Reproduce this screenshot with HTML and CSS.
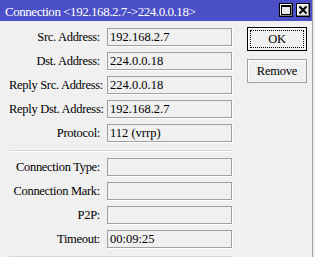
FILE: index.html
```html
<!DOCTYPE html>
<html>
<head>
<meta charset="utf-8">
<link rel="stylesheet" href="styles.css">
</head>
<body>
<div class="window">
  <div class="titlebar">
    <span class="title">Connection &lt;192.168.2.7-&gt;224.0.0.18&gt;</span>
    <div class="tb-buttons">
      <span class="tb-btn">
        <svg width="12" height="12" viewBox="0 0 12 12"><rect x="1.5" y="1.5" width="9" height="9" fill="none" stroke="#000" stroke-width="1"/><rect x="1" y="1" width="10" height="2" fill="#000"/></svg>
      </span>
      <span class="tb-btn">
        <svg width="12" height="12" viewBox="0 0 12 12"><path d="M2.5 2.5 L9.5 9.5 M9.5 2.5 L2.5 9.5" stroke="#000" stroke-width="2"/></svg>
      </span>
    </div>
  </div>
  <div class="content">
    <div class="form">
      <div class="row"><span class="label">Src. Address:</span><span class="field">192.168.2.7</span></div>
      <div class="row"><span class="label">Dst. Address:</span><span class="field">224.0.0.18</span></div>
      <div class="row"><span class="label">Reply Src. Address:</span><span class="field">224.0.0.18</span></div>
      <div class="row"><span class="label">Reply Dst. Address:</span><span class="field">192.168.2.7</span></div>
      <div class="row"><span class="label">Protocol:</span><span class="field">112 (vrrp)</span></div>
      <div class="sep"></div>
      <div class="row"><span class="label">Connection Type:</span><span class="field"></span></div>
      <div class="row"><span class="label">Connection Mark:</span><span class="field"></span></div>
      <div class="row"><span class="label">P2P:</span><span class="field"></span></div>
      <div class="row"><span class="label">Timeout:</span><span class="field">00:09:25</span></div>
      <div class="sep"></div>
    </div>
    <div class="actions">
      <span class="btn btn-default"><span class="focus">OK</span></span>
      <span class="btn">Remove</span>
    </div>
  </div>
</div>
</body>
</html>
```
FILE: styles.css
```css
html, body {
  margin: 0;
  padding: 0;
  background: #f0f0f0;
}
body {
  font-family: "Liberation Serif", "Times New Roman", serif;
  font-size: 12.5px;
  color: #000;
  overflow: hidden;
}
.window {
  width: 312px;
  height: 257px;
  border-right: 1px solid #a0a0a0;
  background: #f0f0f0;
  overflow: hidden;
}
.titlebar {
  height: 21px;
  background: #4a4fc7;
  color: #fff;
  display: flex;
  align-items: flex-start;
  justify-content: space-between;
}
.title {
  font-size: 13px;
  letter-spacing: -0.45px;
  line-height: 15px;
  padding: 4px 0 0 5px;
  white-space: nowrap;
}
.tb-buttons {
  display: flex;
  gap: 3px;
  padding: 3px 2px 0 0;
}
.tb-btn {
  width: 14px;
  height: 14px;
  box-sizing: border-box;
  background: #e8e8e8;
  border: 1px solid #000;
  box-shadow: inset -1px -1px 0 #808080, inset 1px 1px 0 #fff;
  display: flex;
  align-items: center;
  justify-content: center;
}
.content {
  display: flex;
  align-items: flex-start;
  padding-top: 6px;
}
.form {
  padding: 1px 0 0 9px;
  width: 223px;
  display: flex;
  flex-direction: column;
  gap: 6px;
}
.row {
  display: grid;
  grid-template-columns: 91px 125px;
  column-gap: 7px;
  height: 18px;
  line-height: 16px;
}
.label {
  text-align: right;
  white-space: nowrap;
  letter-spacing: -0.3px;
  padding-top: 1px;
}
.field {
  box-sizing: border-box;
  height: 18px;
  border: 1px solid #a0a0a0;
  box-shadow: 1px 1px 0 #fff;
  padding-left: 2px;
  white-space: nowrap;
  overflow: hidden;
}
.sep {
  height: 1px;
  background: #d8d8d8;
  border-bottom: 1px solid #fff;
  margin: 2px 0 0;
}
.actions {
  margin-left: 15px;
  display: flex;
  flex-direction: column;
  gap: 8px;
}
.btn {
  box-sizing: border-box;
  width: 60px;
  height: 24px;
  border: 1px solid #a0a0a0;
  box-shadow: inset 1px 1px 0 #fff;
  background: #f0f0f0;
  display: flex;
  align-items: center;
  justify-content: center;
  letter-spacing: -0.2px;
  line-height: 16px;
}
.btn-default {
  border: 1px solid #000;
  padding: 2px;
}
.focus {
  box-sizing: border-box;
  width: 100%;
  height: 100%;
  border: 1px dotted #000;
  display: flex;
  align-items: center;
  justify-content: center;
}
```
